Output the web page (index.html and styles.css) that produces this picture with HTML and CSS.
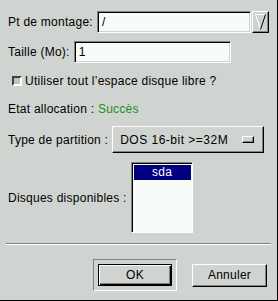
FILE: index.html
```html
<!DOCTYPE html>
<html lang="fr">
<head>
    <meta charset="UTF-8">
    <title>Partition</title>
    <link rel="stylesheet" href="styles.css">
</head>
<body>
    <div class="dialog">
        <div class="row row-mount">
            <span class="label">Pt de montage:</span>
            <div class="entry entry-mount">/</div>
            <button class="arrow-btn">
                <svg width="11" height="16" viewBox="0 0 11 16">
                    <line x1="0.5" y1="0.5" x2="10.5" y2="0.5" stroke="#ffffff"/>
                    <line x1="0.5" y1="0.5" x2="5.5" y2="15.5" stroke="#ffffff"/>
                    <line x1="10.5" y1="0.5" x2="5.5" y2="15.5" stroke="#000000"/>
                </svg>
            </button>
        </div>
        <div class="row row-size">
            <span class="label">Taille (Mo):</span>
            <div class="entry entry-size">1</div>
        </div>
        <div class="row row-check">
            <span class="check"></span>
            <span>Utiliser tout l’espace disque libre ?</span>
        </div>
        <div class="row row-state">
            <span>Etat allocation : <span class="success">Succès</span></span>
        </div>
        <div class="row row-type">
            <span class="label">Type de partition :</span>
            <div class="option-btn">
                <span class="option-text">DOS 16-bit &gt;=32M</span>
                <span class="indicator"></span>
            </div>
        </div>
        <div class="row row-disks">
            <span class="label">Disques disponibles :</span>
            <div class="list">
                <div class="list-item selected">sda</div>
            </div>
        </div>
        <div class="separator"></div>
        <div class="actions">
            <div class="default-frame">
                <button class="btn btn-default">OK</button>
            </div>
            <button class="btn">Annuler</button>
        </div>
    </div>
</body>
</html>
```

FILE: styles.css
```css
body {
    margin: 0;
    padding: 0;
    background: #d0d4d0;
    font-family: "Liberation Sans", Arial, sans-serif;
    font-size: 12px;
    color: #000;
}
.dialog {
    width: 278px;
    height: 301px;
    box-sizing: border-box;
    padding: 11px 0 0 8px;
    border-right: 1px solid #000;
    border-bottom: 1px solid #000;
    line-height: 14px;
    letter-spacing: 0.25px;
}
.row {
    display: flex;
    align-items: center;
}
.label {
    margin-right: 4px;
    white-space: nowrap;
}
.row-mount {
    height: 22px;
    padding-right: 8px;
}
.row-size {
    height: 22px;
    margin-top: 8px;
}
.row-check {
    height: 14px;
    margin-top: 11px;
    padding-left: 4px;
}
.row-state {
    height: 14px;
    margin-top: 14px;
}
.row-type {
    height: 27px;
    margin-top: 10px;
}
.row-disks {
    height: 71px;
    margin-top: 9px;
}
.entry {
    height: 22px;
    box-sizing: border-box;
    background: #f8fcf8;
    border: 1px solid;
    border-color: #808480 #ffffff #ffffff #808480;
    box-shadow: inset 1px 1px 0 #000, inset -1px -1px 0 #d0d4d0;
    padding: 3px 0 0 4px;
}
.entry-mount {
    flex: 1;
}
.entry-size {
    width: 157px;
}
.arrow-btn {
    width: 17px;
    height: 22px;
    margin: 0 0 0 1px;
    padding: 0;
    box-sizing: border-box;
    background: #d0d4d0;
    border: 1px solid;
    border-color: #ffffff #000 #000 #ffffff;
    box-shadow: inset -1px -1px 0 #808480;
    display: flex;
    align-items: center;
    justify-content: center;
}
.check {
    width: 10px;
    height: 10px;
    box-sizing: border-box;
    margin-right: 3px;
    background: #c0c4c0;
    border: 2px solid;
    border-color: #404040 #ffffff #ffffff #404040;
}
.success {
    color: #209020;
}
.option-btn {
    width: 152px;
    height: 27px;
    box-sizing: border-box;
    border: 1px solid;
    border-color: #ffffff #000 #000 #ffffff;
    box-shadow: inset -1px -1px 0 #808480;
    display: flex;
    align-items: center;
    justify-content: space-between;
    padding: 0 9px 0 7px;
}
.option-text {
    letter-spacing: 0.5px;
}
.indicator {
    width: 12px;
    height: 7px;
    box-sizing: border-box;
    border: 1px solid;
    border-color: #ffffff #000 #000 #ffffff;
    box-shadow: inset -1px -1px 0 #808480;
}
.list {
    width: 62px;
    height: 71px;
    box-sizing: border-box;
    background: #f8fcf8;
    border: 1px solid;
    border-color: #808480 #ffffff #ffffff #808480;
    box-shadow: inset 1px 1px 0 #000;
    padding: 2px 1px 0 2px;
}
.list-item {
    height: 15px;
    line-height: 15px;
    text-align: center;
}
.selected {
    background: #000080;
    color: #ffffff;
}
.separator {
    margin: 10px 6px 0 -2px;
    height: 0;
    border-top: 1px solid #808480;
    border-bottom: 1px solid #ffffff;
}
.actions {
    display: flex;
    justify-content: flex-end;
    align-items: center;
    gap: 15px;
    margin-top: 14px;
    padding-right: 10px;
}
.default-frame {
    border: 1px solid;
    border-color: #808480 #ffffff #ffffff #808480;
    padding: 4px;
}
.btn {
    width: 75px;
    height: 23px;
    box-sizing: border-box;
    margin: 0;
    padding: 0;
    font-family: "Liberation Sans", Arial, sans-serif;
    font-size: 12px;
    letter-spacing: 0.25px;
    color: #000;
    background: #d0d4d0;
    border: 1px solid;
    border-color: #ffffff #000 #000 #ffffff;
    box-shadow: inset -1px -1px 0 #808480;
}
.btn-default {
    width: 74px;
    height: 22px;
    border-color: #000;
    box-shadow: inset 1px 1px 0 #ffffff, inset -1px -1px 0 #000, inset -2px -2px 0 #808480;
}
```
